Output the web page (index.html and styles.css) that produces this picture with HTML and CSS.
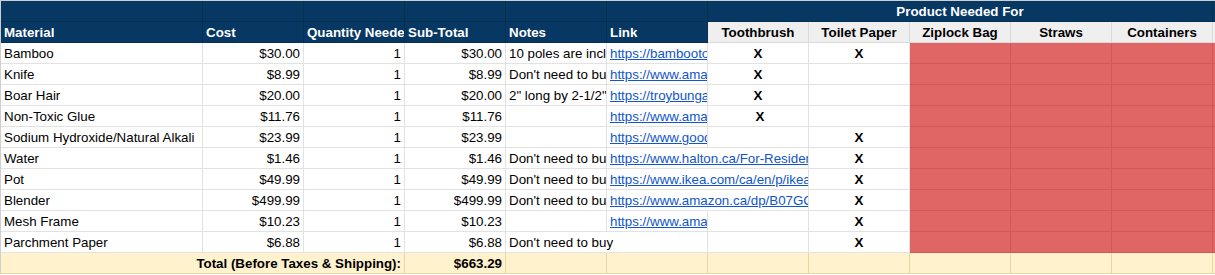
FILE: index.html
```html
<!DOCTYPE html>
<html>
<head>
<meta charset="utf-8">
<link rel="stylesheet" href="styles.css">
</head>
<body>
<table class="sheet">
  <colgroup>
    <col class="c-wide"><col class="c"><col class="c"><col class="c"><col class="c"><col class="c"><col class="c"><col class="c"><col class="c"><col class="c"><col class="c"><col class="c-extra">
  </colgroup>
  <tr class="hdr1">
    <td class="navy"><div class="v"></div></td>
    <td class="navy"><div class="v"></div></td>
    <td class="navy"><div class="v"></div></td>
    <td class="navy"><div class="v"></div></td>
    <td class="navy"><div class="v"></div></td>
    <td class="navy"><div class="v"></div></td>
    <td class="navy merged" colspan="5"><div class="v center">Product Needed For</div></td>
    <td class="navy"><div class="v"></div></td>
  </tr>
  <tr class="hdr2">
    <td class="navy"><div class="v">Material</div></td>
    <td class="navy"><div class="v">Cost</div></td>
    <td class="navy"><div class="v">Quantity Needed</div></td>
    <td class="navy"><div class="v">Sub-Total</div></td>
    <td class="navy"><div class="v">Notes</div></td>
    <td class="navy"><div class="v">Link</div></td>
    <td class="gray"><div class="v center">Toothbrush</div></td>
    <td class="gray"><div class="v center">Toilet Paper</div></td>
    <td class="gray"><div class="v center">Ziplock Bag</div></td>
    <td class="gray"><div class="v center">Straws</div></td>
    <td class="gray"><div class="v center">Containers</div></td>
    <td class="gray"><div class="v"></div></td>
  </tr>
  <tr>
    <td><div class="v">Bamboo</div></td>
    <td><div class="v right">$30.00</div></td>
    <td><div class="v right">1</div></td>
    <td><div class="v right">$30.00</div></td>
    <td><div class="v">10 poles are inclu</div></td>
    <td><div class="v"><a class="link">https://bambooto</a></div></td>
    <td><div class="v center x">X</div></td>
    <td><div class="v center x">X</div></td>
    <td class="red"><div class="v"></div></td>
    <td class="red"><div class="v"></div></td>
    <td class="red"><div class="v"></div></td>
    <td class="red"><div class="v"></div></td>
  </tr>
  <tr>
    <td><div class="v">Knife</div></td>
    <td><div class="v right">$8.99</div></td>
    <td><div class="v right">1</div></td>
    <td><div class="v right">$8.99</div></td>
    <td><div class="v">Don't need to bu</div></td>
    <td><div class="v"><a class="link">https://www.ama</a></div></td>
    <td><div class="v center x">X</div></td>
    <td><div class="v"></div></td>
    <td class="red"><div class="v"></div></td>
    <td class="red"><div class="v"></div></td>
    <td class="red"><div class="v"></div></td>
    <td class="red"><div class="v"></div></td>
  </tr>
  <tr>
    <td><div class="v">Boar Hair</div></td>
    <td><div class="v right">$20.00</div></td>
    <td><div class="v right">1</div></td>
    <td><div class="v right">$20.00</div></td>
    <td><div class="v">2" long by 2-1/2"</div></td>
    <td><div class="v"><a class="link">https://troybunga</a></div></td>
    <td><div class="v center x">X</div></td>
    <td><div class="v"></div></td>
    <td class="red"><div class="v"></div></td>
    <td class="red"><div class="v"></div></td>
    <td class="red"><div class="v"></div></td>
    <td class="red"><div class="v"></div></td>
  </tr>
  <tr>
    <td><div class="v">Non-Toxic Glue</div></td>
    <td><div class="v right">$11.76</div></td>
    <td><div class="v right">1</div></td>
    <td><div class="v right">$11.76</div></td>
    <td><div class="v"></div></td>
    <td><div class="v"><a class="link">https://www.ama</a></div></td>
    <td><div class="v center x">&nbsp;X</div></td>
    <td><div class="v"></div></td>
    <td class="red"><div class="v"></div></td>
    <td class="red"><div class="v"></div></td>
    <td class="red"><div class="v"></div></td>
    <td class="red"><div class="v"></div></td>
  </tr>
  <tr>
    <td><div class="v">Sodium Hydroxide/Natural Alkali</div></td>
    <td><div class="v right">$23.99</div></td>
    <td><div class="v right">1</div></td>
    <td><div class="v right">$23.99</div></td>
    <td><div class="v"></div></td>
    <td><div class="v"><a class="link">https://www.good</a></div></td>
    <td><div class="v"></div></td>
    <td><div class="v center x">X</div></td>
    <td class="red"><div class="v"></div></td>
    <td class="red"><div class="v"></div></td>
    <td class="red"><div class="v"></div></td>
    <td class="red"><div class="v"></div></td>
  </tr>
  <tr>
    <td><div class="v">Water</div></td>
    <td><div class="v right">$1.46</div></td>
    <td><div class="v right">1</div></td>
    <td><div class="v right">$1.46</div></td>
    <td><div class="v">Don't need to bu</div></td>
    <td class="spill"><div class="v wide"><a class="link">https://www.halton.ca/For-Residen</a></div></td>
    <td><div class="v"></div></td>
    <td><div class="v center x">X</div></td>
    <td class="red"><div class="v"></div></td>
    <td class="red"><div class="v"></div></td>
    <td class="red"><div class="v"></div></td>
    <td class="red"><div class="v"></div></td>
  </tr>
  <tr>
    <td><div class="v">Pot</div></td>
    <td><div class="v right">$49.99</div></td>
    <td><div class="v right">1</div></td>
    <td><div class="v right">$49.99</div></td>
    <td><div class="v">Don't need to bu</div></td>
    <td class="spill"><div class="v wide"><a class="link">https://www.ikea.com/ca/en/p/ikea</a></div></td>
    <td><div class="v"></div></td>
    <td><div class="v center x">X</div></td>
    <td class="red"><div class="v"></div></td>
    <td class="red"><div class="v"></div></td>
    <td class="red"><div class="v"></div></td>
    <td class="red"><div class="v"></div></td>
  </tr>
  <tr>
    <td><div class="v">Blender</div></td>
    <td><div class="v right">$499.99</div></td>
    <td><div class="v right">1</div></td>
    <td><div class="v right">$499.99</div></td>
    <td><div class="v">Don't need to bu</div></td>
    <td class="spill"><div class="v wide"><a class="link">https://www.amazon.ca/dp/B07GC</a></div></td>
    <td><div class="v"></div></td>
    <td><div class="v center x">X</div></td>
    <td class="red"><div class="v"></div></td>
    <td class="red"><div class="v"></div></td>
    <td class="red"><div class="v"></div></td>
    <td class="red"><div class="v"></div></td>
  </tr>
  <tr>
    <td><div class="v">Mesh Frame</div></td>
    <td><div class="v right">$10.23</div></td>
    <td><div class="v right">1</div></td>
    <td><div class="v right">$10.23</div></td>
    <td><div class="v"></div></td>
    <td><div class="v"><a class="link">https://www.ama</a></div></td>
    <td><div class="v"></div></td>
    <td><div class="v center x">X</div></td>
    <td class="red"><div class="v"></div></td>
    <td class="red"><div class="v"></div></td>
    <td class="red"><div class="v"></div></td>
    <td class="red"><div class="v"></div></td>
  </tr>
  <tr>
    <td><div class="v">Parchment Paper</div></td>
    <td><div class="v right">$6.88</div></td>
    <td><div class="v right">1</div></td>
    <td><div class="v right">$6.88</div></td>
    <td class="spill"><div class="v wide">Don't need to buy</div></td>
    <td><div class="v"></div></td>
    <td><div class="v"></div></td>
    <td><div class="v center x">X</div></td>
    <td class="red"><div class="v"></div></td>
    <td class="red"><div class="v"></div></td>
    <td class="red"><div class="v"></div></td>
    <td class="red"><div class="v"></div></td>
  </tr>
  <tr class="total">
    <td colspan="3"><div class="v right b">Total (Before Taxes &amp; Shipping):</div></td>
    <td><div class="v right b">$663.29</div></td>
    <td><div class="v"></div></td>
    <td><div class="v"></div></td>
    <td><div class="v"></div></td>
    <td><div class="v"></div></td>
    <td><div class="v"></div></td>
    <td><div class="v"></div></td>
    <td><div class="v"></div></td>
    <td><div class="v"></div></td>
  </tr>
</table>
</body>
</html>
```

FILE: styles.css
```css
html, body {
  margin: 0;
  padding: 0;
  background: #ffffff;
  overflow: hidden;
}

.sheet {
  border-collapse: separate;
  border-spacing: 0;
  table-layout: fixed;
  width: 1253px;
  border-top: 1px solid #cfcfcf;
  border-left: 1px solid #cfcfcf;
  font-family: "Liberation Sans", Arial, sans-serif;
  font-size: 13.333px;
  color: #000000;
}

.c-wide { width: 202px; }
.c { width: 101px; }
.c-extra { width: 40px; }

.sheet td {
  padding: 0;
  border-right: 1px solid #e2e2e2;
  border-bottom: 1px solid #e2e2e2;
  background: #ffffff;
  vertical-align: top;
}

.v {
  height: 20px;
  line-height: 21px;
  padding: 0 3px;
  white-space: nowrap;
  overflow: hidden;
}

.center { text-align: center; }
.right { text-align: right; }
.b { font-weight: bold; }
.x { font-weight: bold; }

.link {
  color: #1155cc;
  text-decoration: underline;
}

.sheet td.navy {
  background: #073763;
  color: #ffffff;
  font-weight: bold;
  border-right-color: #06304f;
  border-bottom-color: #06304f;
}

.sheet td.gray {
  background: #efefef;
  font-weight: bold;
  border-right-color: #dadada;
  border-bottom-color: #dadada;
}

.sheet td.red {
  background: #e06666;
  border-right-color: #cc5a5a;
  border-bottom-color: #cc5a5a;
}

.sheet td.spill {
  border-right-color: transparent;
}

.wide {
  width: 195px;
}

.sheet .total td {
  background: #fff2cc;
  border-right-color: #e6d6a8;
  border-bottom-color: #e6d6a8;
}
```
